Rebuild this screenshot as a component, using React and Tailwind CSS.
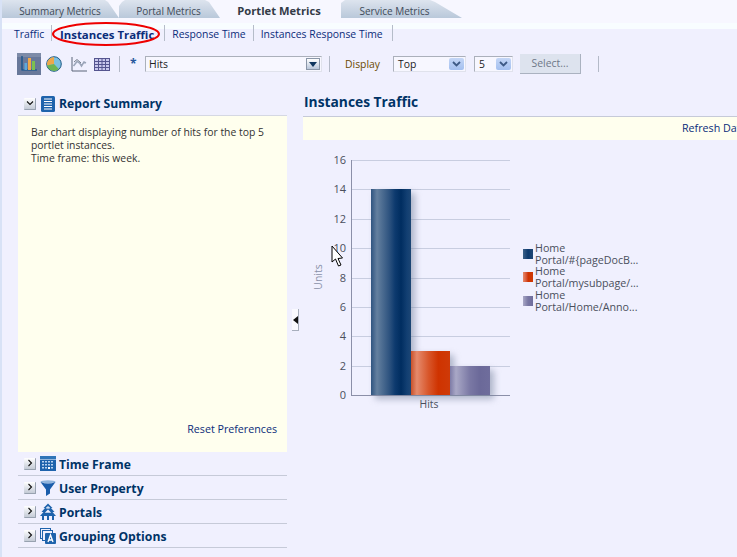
import React from "react";

const FONT = "[font-family:'Open_Sans','Noto_Sans',sans-serif]";

function Tab({ label, className }) {
  return (
    <div className={`h-[18px] pt-[5px] flex items-center justify-center text-[10px] text-[#3f4a58] bg-gradient-to-b from-[#dde4ee] to-[#b9c8da] ${className}`}>
      {label}
    </div>
  );
}

function SubLink({ children, bold, className = "" }) {
  return (
    <div className={`h-[16px] pt-[3px] flex items-center border-r border-[#b5bcc9] text-[#0b2c7a] ${bold ? "font-bold text-[11.4px]" : "text-[10.4px]"} ${className}`}>
      {children}
    </div>
  );
}

function BarIcon() {
  return (
    <svg width="24" height="22" viewBox="0 0 24 22" className="block">
      <rect width="24" height="22" fill="#68789a" />
      <rect width="24" height="4" fill="#7d8ba8" />
      <path d="M5 3v14h15" stroke="#0b4f8a" strokeWidth="1.2" fill="none" />
      <rect x="7.500" y="10" width="2.500" height="7" fill="#5ba8dc" />
      <rect x="11" y="5" width="3" height="12" fill="#f0a848" />
      <rect x="15" y="8" width="3" height="9" fill="#7cc050" />
    </svg>
  );
}

function PieIcon() {
  return (
    <svg width="16" height="16" viewBox="0 0 16 16" className="block">
      <circle cx="8" cy="8" r="7.300" fill="#7cc0e0" stroke="#1f5a86" strokeWidth="1" />
      <path d="M8 8V1A7 7 0 0 0 1.200 9.500Z" fill="#eda84a" />
      <path d="M8 8L1.200 9.500A7 7 0 0 0 12.800 13Z" fill="#6db452" />
    </svg>
  );
}

function LineIcon() {
  return (
    <svg width="16" height="15" viewBox="0 0 16 15" className="block">
      <path d="M1 0v14h15" stroke="#5a6478" strokeWidth="1" fill="none" />
      <path d="M2.500 9L6 4.500L9 6.500L10.500 9L13 5L15 6" stroke="#9aa4b8" strokeWidth="1.500" fill="none" />
      <path d="M3 5L6 2.500L10 6" stroke="#3f4a58" strokeWidth=".7" fill="none" />
    </svg>
  );
}

function TableIcon() {
  return (
    <svg width="16" height="13" viewBox="0 0 16 13" className="block">
      <rect x=".5" y=".5" width="15" height="12" fill="#c9c8ec" stroke="#55558f" />
      <path d="M.5 3.500h15M.5 6.500h15M.5 9.500h15M4.500 .5v12M8 .5v12M11.500 .5v12" stroke="#55558f" strokeWidth="1" />
    </svg>
  );
}

function Disclosure({ open }) {
  return (
    <div className="w-[12px] h-[12px] flex items-center justify-center bg-gradient-to-b from-[#ffffff] to-[#c4cbd6] border-r border-b border-[#98a2b0] rounded-[1px] shrink-0">
      <svg width="8" height="8" viewBox="0 0 8 8">
        <path d={open ? "M1 2.500L4 5.500L7 2.500" : "M2.500 1L5.500 4L2.500 7"} stroke="#111" strokeWidth="1.100" fill="none" />
      </svg>
    </div>
  );
}

function DocIcon() {
  return (
    <svg width="14" height="16" viewBox="0 0 14 16" className="block">
      <rect width="14" height="16" rx="1.500" fill="#1e63ac" />
      <path d="M3 3h8M3 5.500h8M3 8h8M3 10.500h8M3 13h8" stroke="#ffffff" strokeWidth="1" />
    </svg>
  );
}

function CalIcon() {
  return (
    <svg width="16" height="15" viewBox="0 0 16 15" className="block">
      <rect width="16" height="15" fill="#1e63ac" />
      <rect y="0" width="16" height="3" fill="#2f74b8" />
      <path d="M0 3.500h16" stroke="#e6eefc" strokeWidth=".6" />
      <g fill="#b9d3f0">
        <path d="M2 5h2v1.500H2zM5 5h2v1.500H5zM8 5h2v1.500H8zM11 5h2v1.500h-2zM2 8h2v1.500H2zM5 8h2v1.500H5zM8 8h2v1.500H8zM11 8h2v1.500h-2zM2 11h2v1.500H2zM5 11h2v1.500H5zM11 11h2v1.500h-2z" />
      </g>
      <rect x="8" y="11" width="2" height="2" fill="#ffffff" />
    </svg>
  );
}

function FunnelIcon() {
  return (
    <svg width="16" height="16" viewBox="0 0 16 16" className="block">
      <ellipse cx="8" cy="1.800" rx="7.500" ry="1.500" fill="#8fb4dc" />
      <path d="M0.500 2L6 9.500V16L10 13.500V9.500L15.500 2Q8 5 .5 2Z" fill="#1a5dab" />
    </svg>
  );
}

function PortalIcon() {
  return (
    <svg width="16" height="17" viewBox="0 0 16 17" className="block">
      <path d="M8 0.500L3.500 5H5L1.500 9H3.500L0 13H16L12.500 9H14.500L11 5H12.500Z" fill="#1e63ac" />
      <path d="M8 3L5.800 5.200H10.200ZM8 6.500L4.800 9.800H11.200Z" fill="#f0f0fe" />
      <rect x="6.500" y="4" width="3" height="1.500" fill="#cfe0f5" />
      <path d="M2 13h2v4H2zM7 12h2v5H7zM12 13h2v4h-2z" fill="#1e63ac" />
    </svg>
  );
}

function GroupIcon() {
  return (
    <svg width="16" height="16" viewBox="0 0 16 16" className="block">
      <rect x=".5" y=".5" width="10" height="10" fill="none" stroke="#1e63ac" />
      <rect x="2.500" y="2.500" width="10" height="10" fill="#f0f0fe" stroke="#1e63ac" />
      <rect x="5" y="5" width="11" height="11" rx="1" fill="#1e63ac" />
      <path d="M8 14L10.500 7L13 14M8.900 12H12.100" stroke="#ffffff" strokeWidth="1.300" fill="none" />
    </svg>
  );
}

function Row({ icon, label }) {
  return (
    <div className="h-[24px] border-b border-[#c6cad8] flex items-center pl-[6px]">
      <Disclosure />
      <div className="w-[16px] ml-[4px] flex justify-center">{icon}</div>
      <span className="ml-[3px] pt-[3px] text-[12.2px] font-bold text-[#003366]">{label}</span>
    </div>
  );
}

function SelectBox({ value, w }) {
  return (
    <div className={`h-[16px] ${w} bg-[#f7f7ff] border border-[#abb0bb] border-b-[#e0e2ec] border-r-[#e0e2ec] flex items-center justify-between pl-[4px] pr-[1px] text-[10.4px] text-[#222]`}>
      <span className="pt-[2px]">{value}</span>
      <div className="w-[15px] h-[12px] bg-gradient-to-b from-[#c4d6f6] to-[#a4c0f0] rounded-[2px] flex items-center justify-center">
        <svg width="9" height="6" viewBox="0 0 9 6">
          <path d="M1 1L4.500 4.500L8 1" stroke="#3e5a86" strokeWidth="1.800" fill="none" />
        </svg>
      </div>
    </div>
  );
}

function Sep({ className = "" }) {
  return <div className={`w-px h-[16px] bg-[#b4bac8] ${className}`} />;
}

function Chart() {
  const ticks = [
    [16, 160], [14, 189], [12, 219], [10, 248], [8, 278], [6, 307], [4, 336], [2, 366], [0, 395],
  ];
  const family = "'Open Sans','Noto Sans',sans-serif";
  return (
    <svg width="218" height="262" viewBox="303 155 218 262" className="block shrink-0">
      <defs>
        <linearGradient id="bBlue" x1="0" x2="1" y1="0" y2="0">
          <stop offset="0" stopColor="#2f5480" />
          <stop offset=".15" stopColor="#64809f" />
          <stop offset=".45" stopColor="#2f5480" />
          <stop offset=".6" stopColor="#0d3a6e" />
          <stop offset=".75" stopColor="#002d60" />
          <stop offset=".9" stopColor="#123f72" />
          <stop offset="1" stopColor="#1d4674" />
        </linearGradient>
        <linearGradient id="bRed" x1="0" x2="1" y1="0" y2="0">
          <stop offset="0" stopColor="#c9512a" />
          <stop offset=".15" stopColor="#e58a6c" />
          <stop offset=".45" stopColor="#d8562a" />
          <stop offset=".7" stopColor="#cf3300" />
          <stop offset="1" stopColor="#cf3a08" />
        </linearGradient>
        <linearGradient id="bPurple" x1="0" x2="1" y1="0" y2="0">
          <stop offset="0" stopColor="#7d7ba6" />
          <stop offset=".15" stopColor="#a9a8c6" />
          <stop offset=".5" stopColor="#7a78a4" />
          <stop offset=".75" stopColor="#6b6999" />
          <stop offset="1" stopColor="#6f6d9c" />
        </linearGradient>
        <filter id="shadow" x="-30%" y="-10%" width="160%" height="130%">
          <feGaussianBlur stdDeviation="3.500" />
        </filter>
      </defs>
      {ticks.map(([v, y]) => (
        <g key={v}>
          <line x1="351" x2="510" y1={y + 0.5} y2={y + 0.5} stroke={v === 0 ? "#8b8fa8" : "#c8cde0"} />
          <text x="346" y={y + 4} textAnchor="end" fontSize="11" fill="#4a4f5c" fontFamily={family}>{v}</text>
        </g>
      ))}
      <line x1="351.500" x2="351.500" y1="160" y2="395" stroke="#8b8fa8" />
      <g filter="url(#shadow)" fill="#76829c" opacity=".55">
        <rect x="375" y="193" width="40" height="206" />
        <rect x="415" y="355" width="39" height="44" />
        <rect x="454" y="370" width="40" height="29" />
      </g>
      <rect x="371" y="189" width="40" height="206" fill="url(#bBlue)" />
      <rect x="411" y="351" width="39" height="44" fill="url(#bRed)" />
      <rect x="450" y="366" width="40" height="29" fill="url(#bPurple)" />
      <text x="429" y="408" textAnchor="middle" fontSize="10.4" fill="#4a4f5c" fontFamily={family}>Hits</text>
      <text x="322" y="277" textAnchor="middle" fontSize="10.4" fill="#8a90a8" transform="rotate(-90 322 277)" fontFamily={family}>Units</text>
      <path d="M332 246V262L335.500 259L338.500 266L341 265L338 258.500L342.500 258Z" fill="#ffffff" stroke="#000000" strokeWidth="1" />
    </svg>
  );
}

function LegendItem({ line1, line2, swatch }) {
  return (
    <div className="flex items-center h-[23.5px]">
      <div className={`w-[10px] h-[10px] mr-[2px] shrink-0 ${swatch}`} />
      <div className="leading-[12px] text-[10.7px] text-[#4a4f5c] whitespace-nowrap">
        <div>{line1}</div>
        <div>{line2}</div>
      </div>
    </div>
  );
}

export default function App() {
  return (
    <div className={`w-[737px] h-[557px] overflow-hidden bg-[#f0f0fe] border-l-2 border-[#d8e2f6] ${FONT}`}>
      <div className="h-[23px] bg-[#f7f7ff] flex items-start">
        <Tab label="Summary Metrics" className="w-[117px] pr-[1px] [clip-path:polygon(0_0,103px_0,106px_2px,117px_18px,0_18px)]" />
        <Tab label="Portal Metrics" className="w-[101px] pr-[2px] [clip-path:polygon(3px_2px,6px_0,86px_0,90px_2px,101px_18px,0_18px,0_6px)]" />
        <div className="w-[120px] h-[18px] pt-[5px] pr-[2px] flex items-center justify-center text-[11.2px] font-bold text-[#333b47]">Portlet Metrics</div>
        <Tab label="Service Metrics" className="w-[122px] pr-[13px] [clip-path:polygon(1px_3px,5px_0,90px_0,95px_2px,122px_18px,1px_18px)]" />
      </div>
      <div className="h-[6px] bg-[#f8fdff]" />
      <div className="h-[16px] mt-[-4px] flex items-center">
        <SubLink className="pl-[12px] pr-[8px] w-[50px]">Traffic</SubLink>
        <div className="relative">
          <SubLink bold className="pl-[8px] pr-[10px]">Instances Traffic</SubLink>
          <svg width="108" height="24" viewBox="0 0 108 24" className="absolute left-0 top-[-3px] overflow-visible">
            <ellipse cx="54" cy="12" rx="53" ry="11" fill="none" stroke="#ee0000" strokeWidth="2" />
          </svg>
        </div>
        <SubLink className="pl-[7px] pr-[7px]">Response Time</SubLink>
        <SubLink className="pl-[7px] pr-[9px]">Instances Response Time</SubLink>
      </div>
      <div className="h-[22px] mt-[12px] flex items-center pl-[15px]">
        <BarIcon />
        <div className="ml-[5px]"><PieIcon /></div>
        <div className="ml-[9px]"><LineIcon /></div>
        <div className="ml-[7px]"><TableIcon /></div>
        <Sep className="ml-[9px]" />
        <span className="ml-[10px] w-[15px] text-[12px] font-bold text-[#26579c]">*</span>
        <div className="h-[16px] w-[177px] bg-[#f7f7ff] border border-[#abb0bb] border-b-[#e0e2ec] border-r-[#e0e2ec] flex items-center justify-between pl-[3px] pr-[1px] text-[10.4px] text-[#222]">
          <span className="pt-[2px]">Hits</span>
          <div className="w-[14px] h-[12px] bg-gradient-to-b from-[#ffffff] to-[#b9c6da] border border-[#8a96a8] flex items-center justify-center">
            <svg width="8" height="5" viewBox="0 0 8 5"><path d="M0 0H8L4 5Z" fill="#10365f" /></svg>
          </div>
        </div>
        <Sep className="ml-[7px]" />
        <span className="ml-[15px] w-[35px] pt-[2px] text-[10.4px] text-[#6b4a00]">Display</span>
        <SelectBox value="Top" w="w-[73px] ml-[13px]" />
        <SelectBox value="5" w="w-[39px] ml-[8px]" />
        <div className="ml-[7px] w-[61px] h-[20px] bg-[#dde3ee] border-r border-b border-[#aab2c0] flex items-center justify-center text-[10.4px] text-[#6f7888]">Select...</div>
        <Sep className="ml-[17px]" />
      </div>
      <div className="flex mt-[17px] items-start">
        <div className="w-[269px] ml-[16px] shrink-0">
          <div className="h-[23px] flex items-center pl-[6px]">
            <Disclosure open />
            <div className="ml-[5px]"><DocIcon /></div>
            <span className="ml-[4px] pt-[2px] text-[12.2px] font-bold text-[#003366]">Report Summary</span>
          </div>
          <div className="h-[337px] bg-[#ffffee] border-t border-[#d5d8e3] px-[13px] pt-[10px] flex flex-col text-[10.4px] leading-[13px] text-[#333]">
            <p className="whitespace-nowrap">Bar chart displaying number of hits for the top 5<br />portlet instances.<br />Time frame: this week.</p>
            <div className="mt-auto mb-[16px] -mr-[3px] text-right text-[10.7px] text-[#0b2c7a]">Reset Preferences</div>
          </div>
          <Row icon={<CalIcon />} label="Time Frame" />
          <Row icon={<FunnelIcon />} label="User Property" />
          <Row icon={<PortalIcon />} label="Portals" />
          <Row icon={<GroupIcon />} label="Grouping Options" />
        </div>
        <div className="w-[16px] shrink-0 flex justify-start pl-[5px] pt-[217px]">
          <div className="w-[7px] h-[22px] bg-[#fafaff] border-r border-b border-[#a8afbd] flex items-center justify-center">
            <svg width="5" height="8" viewBox="0 0 5 8"><path d="M5 0V8L0 4Z" fill="#111" /></svg>
          </div>
        </div>
        <div className="w-[434px] shrink-0 overflow-hidden">
          <div className="h-[25px] pb-[3px] pl-[1px] border-b border-[#c6cad8] flex items-center text-[13.8px] font-bold text-[#003366]">Instances Traffic</div>
          <div className="h-[23px] bg-[#ffffee] flex items-center pl-[379px] text-[10.7px] text-[#0b2c7a] whitespace-nowrap">Refresh Data</div>
          <div className="flex items-start mt-[15px]">
            <Chart />
            <div className="mt-[87px] ml-[2px] flex flex-col">
              <LegendItem line1="Home" line2="Portal/#{pageDocB..." swatch="bg-gradient-to-r from-[#3a6088] via-[#0d3a6e] to-[#1d4674]" />
              <LegendItem line1="Home" line2="Portal/mysubpage/..." swatch="bg-gradient-to-r from-[#e58a6c] via-[#cf3300] to-[#cf3a08]" />
              <LegendItem line1="Home" line2="Portal/Home/Anno..." swatch="bg-gradient-to-r from-[#a9a8c6] via-[#7a78a4] to-[#6f6d9c]" />
            </div>
          </div>
        </div>
      </div>
    </div>
  );
}
